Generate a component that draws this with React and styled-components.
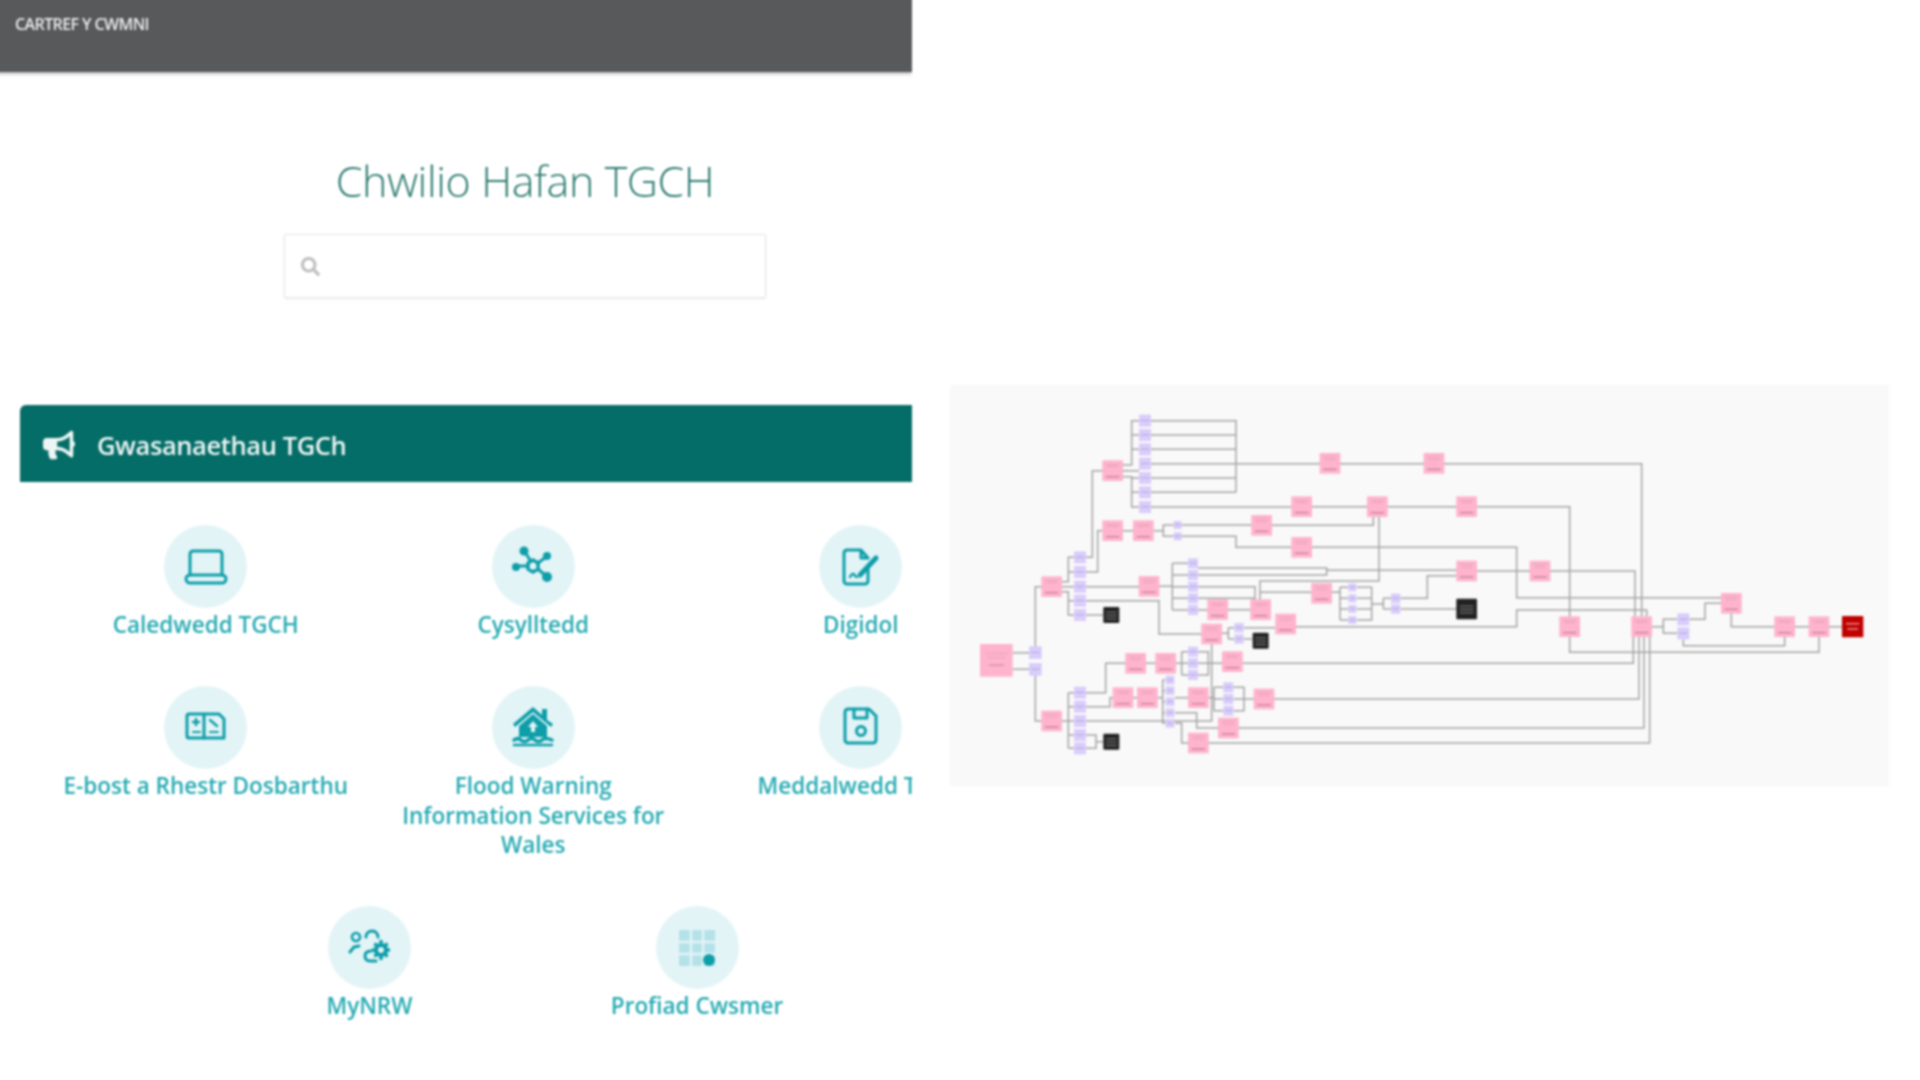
import React from 'react';
import styled, { createGlobalStyle } from 'styled-components';
import { FaBullhorn, FaSearch } from 'react-icons/fa';

const GlobalStyle = createGlobalStyle`
  html, body { margin: 0; padding: 0; background: #fff; overflow: hidden; }
  body { font-family: "Open Sans", "Noto Sans", sans-serif; }
`;

//===================================================
// ================ Define Wrappers =================
//===================================================

// The negative margin keeps the soft edge of the blur outside the window.
const Page = styled.div`
  display: flex;
  width: 1920px;
  height: 1080px;
  margin: -6px;
  padding: 6px;
  overflow: hidden;
  background: #fff;
  filter: blur(0.9px);
`;

const LeftPanel = styled.main`
  width: 912px;
  height: 1080px;
  flex: none;
  overflow: hidden;
  margin-top: -6px;
  margin-left: -6px;
  padding-top: 6px;
  padding-left: 6px;
`;

const TopBar = styled.header`
  height: 78px;
  margin: -6px 0 0 -6px;
  padding: 21px 15px 0 21px;
  box-sizing: border-box;
  background: #58595b;
  box-shadow: 0 1px 4px rgba(0, 0, 0, 0.4);
  color: #ececec;
  font-size: 16px;
  font-weight: 600;
  line-height: 18px;
  letter-spacing: -0.6px;
`;

const SearchBlock = styled.section`
  width: 1050px;
  display: flex;
  flex-direction: column;
  align-items: center;
  padding-top: 81px;
`;

const Title = styled.h1`
  margin: 0;
  font-size: 43px;
  line-height: 56px;
  font-weight: 300;
  color: #2c7b71;
  letter-spacing: -0.4px;
`;

const SearchBox = styled.div`
  width: 482px;
  height: 64px;
  margin-top: 25px;
  padding-left: 16px;
  box-sizing: border-box;
  display: flex;
  align-items: center;
  background: #fff;
  border: 1px solid #e6e6e6;
  border-radius: 2px;
  box-shadow: 0 1px 2px rgba(0, 0, 0, 0.08);
  color: #bdbdbd;
  font-size: 19px;
`;

const Banner = styled.div`
  width: 1010px;
  height: 77px;
  margin: 107px 0 0 20px;
  padding: 2px 0 0 23px;
  box-sizing: border-box;
  display: flex;
  align-items: center;
  gap: 22px;
  background: #056d67;
  border-radius: 6px 0 0 0;
  color: #eef6f5;
  font-size: 25.5px;
  font-weight: 600;
  letter-spacing: -0.4px;
`;

const ServiceList = styled.div`
  width: 982.5px;
  margin: 43px 0 0 42px;
  display: flex;
  flex-wrap: wrap;
  justify-content: center;
  row-gap: 46px;
`;

const ServiceItem = styled.a`
  width: 327.5px;
  padding: 0 20px;
  box-sizing: border-box;
  display: flex;
  flex-direction: column;
  align-items: center;
  color: #27abb3;
  text-align: center;
`;

const IconCircle = styled.span`
  width: 83px;
  height: 83px;
  display: flex;
  align-items: center;
  justify-content: center;
  border-radius: 50%;
  background: #e3f4f7;
  color: #0e9ea9;
`;

const ServiceLabel = styled.span`
  margin-top: 2px;
  font-size: 22.5px;
  line-height: 29.8px;
  font-weight: 600;
  white-space: pre-line;
`;

const DiagramPanel = styled.aside`
  width: 939px;
  height: 401px;
  flex: none;
  margin: 385px 0 0 38px;
  background: #f9f9f9;
`;

const DiagramCanvas = styled.svg`
  display: block;
  width: 100%;
  height: 100%;
  filter: blur(0.3px);
`;

//===================================================
// ================= Service icons ==================
//===================================================

const Icon = ({ children }) => (
  <svg width="46" height="46" viewBox="0 0 46 46" fill="none" stroke="currentColor" strokeWidth="3" strokeLinejoin="round" strokeLinecap="round">
    {children}
  </svg>
);

const LaptopIcon = () => (
  <Icon>
    <path d="M7 31V10a3 3 0 0 1 3-3h26a3 3 0 0 1 3 3v21" />
    <rect x="3" y="31" width="40" height="8" rx="4" />
  </Icon>
);

const NetworkIcon = () => (
  <Icon>
    <path d="M23 16l5 3v6l-5 3-5-3v-6z" strokeWidth="3.5" />
    <path d="M18 22H7M20 16l-5-8M28 19l8-6M28 25l8 7" />
    <g fill="currentColor" stroke="none">
      <circle cx="6" cy="23" r="4" />
      <circle cx="14" cy="7" r="4.5" />
      <circle cx="37" cy="12" r="4" />
      <circle cx="37" cy="33" r="5" />
    </g>
  </Icon>
);

const DocumentPenIcon = () => (
  <Icon>
    <path d="M30 22v15a3 3 0 0 1-3 3H9a3 3 0 0 1-3-3V9a3 3 0 0 1 3-3h14l7 8h-7V6" />
    <path d="M12 33c2-4 4-4 5-1l2 1" strokeWidth="2.5" />
    <path d="M22 31l16-17" strokeWidth="5" />
  </Icon>
);

const MailIcon = () => (
  <Icon>
    <path d="M6 10h30l5 5v19H6a2 2 0 0 1-2-2V12a2 2 0 0 1 2-2z" />
    <path d="M21 10v24" />
    <path d="M10 18h6M13 15v6M27 16l7 6" strokeWidth="2.5" />
    <path d="M10 28h7M27 28h8" strokeWidth="2" />
  </Icon>
);

const FloodHouseIcon = () => (
  <Icon>
    <path d="M3 20L23 3l9 8V5h5v11l6 4-2 3-18-15L5 23z" fill="currentColor" stroke="none" />
    <path d="M9 22L23 10l14 12v11H9z" fill="currentColor" stroke="none" />
    <path d="M23 17l5 6h-3v5h-4v-5h-3z" fill="#e3f4f7" stroke="none" />
    <path d="M4 36c3-2 5-2 7 0s5 2 7 0 5-2 7 0 5 2 7 0 5-2 10 0" strokeWidth="3.5" />
    <path d="M4 41h38" strokeWidth="2.5" />
  </Icon>
);

const SaveIcon = () => (
  <Icon>
    <path d="M10 5h21l7 7v24a3 3 0 0 1-3 3H10a3 3 0 0 1-3-3V8a3 3 0 0 1 3-3z" />
    <path d="M16 5v9h13V5" />
    <circle cx="23" cy="27" r="4.5" />
  </Icon>
);

const PeopleGearIcon = () => (
  <Icon>
    <circle cx="9" cy="12" r="4" strokeWidth="2.6" />
    <path d="M3 27l4-5 5-1" />
    <path d="M19 12c0-4 3-6 6-6 4 0 6 3 6 6" />
    <path d="M24 26c-4 0-6 2-6 5s2 5 5 5h6" />
    <circle cx="34" cy="25" r="5" strokeWidth="4" />
    <path d="M34 15v4M34 31v4M25 25h4M39 25h4M27.5 18.5l3 3M37.5 28.5l3 3M27.5 31.5l3-3M37.5 21.5l3-3" strokeWidth="3.4" strokeLinecap="butt" />
  </Icon>
);

const KeypadIcon = () => (
  <svg width="46" height="46" viewBox="0 0 46 46">
    <rect x="5" y="5" width="36" height="36" fill="#b4e2e8" />
    <path d="M17 5v36M29 5v36M5 17h36M5 29h36" stroke="#e3f4f7" strokeWidth="2.5" />
    <circle cx="35" cy="35" r="6" fill="#0e9ea9" />
  </svg>
);

const SERVICES = [
  { label: 'Caledwedd TGCH', icon: <LaptopIcon /> },
  { label: 'Cysylltedd', icon: <NetworkIcon /> },
  { label: 'Digidol', icon: <DocumentPenIcon /> },
  { label: 'E-bost a Rhestr Dosbarthu', icon: <MailIcon /> },
  { label: 'Flood Warning\nInformation Services for\nWales', icon: <FloodHouseIcon /> },
  { label: 'Meddalwedd TGCH', icon: <SaveIcon /> },
  { label: 'MyNRW', icon: <PeopleGearIcon /> },
  { label: 'Profiad Cwsmer', icon: <KeypadIcon /> }
];

//===================================================
// ================= Process diagram ================
//===================================================
// Coordinates are 1/3 px, so the viewBox is three times the panel size.

const PINK = [
  [305, 605], [305, 1008], [488, 257], [488, 437], [580, 437], [597, 604], [803, 674], [932, 674],
  [785, 747], [1007, 717], [1115, 625], [935, 421], [1055, 365], [1282, 365], [1055, 487], [1140, 235],
  [1452, 235], [557, 835], [647, 835], [847, 830], [519, 938], [592, 938], [745, 938], [942, 942],
  [835, 1029], [745, 1074], [1550, 365], [1550, 558], [1770, 558], [1859, 725], [2075, 725], [2344, 655],
  [2504, 725], [2607, 725]
];

const BLACK = [[484, 690, 48], [932, 767, 48], [484, 1070, 48], [1550, 672, 62]];

const LAVENDER = [
  [256, 803, 38], [256, 853, 38],
  [390, 517, 36], [390, 561, 36], [390, 605, 36], [390, 647, 36], [390, 690, 36],
  [390, 923, 36], [390, 965, 36], [390, 1008, 36], [390, 1050, 36], [390, 1090, 36],
  [585, 107, 36], [585, 150, 36], [585, 193, 36], [585, 236, 36], [585, 279, 36], [585, 322, 36], [585, 366, 36],
  [683, 420, 24], [683, 454, 24],
  [729, 535, 30], [729, 570, 30], [729, 605, 30], [729, 640, 30], [729, 675, 30],
  [867, 728, 28], [867, 762, 28],
  [729, 800, 30], [729, 835, 30], [729, 870, 30],
  [660, 885, 26], [660, 917, 26], [660, 950, 26], [660, 983, 26], [660, 1015, 26],
  [835, 907, 30], [835, 942, 30], [835, 977, 30],
  [1207, 607, 24], [1207, 640, 24], [1207, 672, 24], [1207, 705, 24],
  [1337, 640, 28], [1337, 672, 28],
  [2200, 703, 36], [2200, 745, 36]
];

const EDGES = [
  'M188 803H237', 'M188 853H237', 'M256 785V605H275', 'M256 871V1008H275',
  'M335 590H355V517H372', 'M355 561H372', 'M335 605H372', 'M335 620H355V690H372', 'M355 647H372',
  'M408 517H427V257H458', 'M408 561H443V437H458', 'M408 605H567', 'M627 604H667', 'M667 535V675',
  'M667 535H714', 'M667 570H714', 'M667 605H714', 'M667 640H714', 'M667 675H714',
  'M408 647H627V747H755', 'M408 690H460',
  'M518 240H545V107H567', 'M545 150H567', 'M545 193H567', 'M518 257H567', 'M545 279H567', 'M545 322H567', 'M518 275H545V366H567',
  'M603 107H858V322', 'M603 150H858', 'M603 193H858', 'M603 236H1110', 'M603 279H858', 'M603 322H858',
  'M1170 236H1422', 'M1482 236H2075V695',
  'M603 366H1025', 'M1085 365H1252', 'M1312 365H1520', 'M1580 365H1859V695',
  'M518 437H550', 'M610 437H640V420H671', 'M640 437V454H671', 'M695 420H905', 'M965 421H1270V395',
  'M695 454H858V487H1025', 'M1085 487H1700V638H2314',
  'M744 549H1130V570H744', 'M1130 556H1520', 'M930 645V588H1287V395',
  'M1580 558H1740', 'M1800 558H2055V695',
  'M744 605H915V645', 'M744 640H915', 'M744 675H773', 'M833 674H902', 'M930 622H1085',
  'M1145 622H1170', 'M1170 607V705', 'M1170 607H1195', 'M1170 640H1195', 'M1170 672H1195', 'M1170 705H1195',
  'M1220 607H1265V705H1220', 'M1220 640H1265', 'M1220 672H1265', 'M1265 657H1300', 'M1300 640V672', 'M1300 640H1325', 'M1300 672H1325',
  'M1351 640H1432V572H1520', 'M1351 672H1520',
  'M815 745H835', 'M835 728V762', 'M835 728H853', 'M835 762H853', 'M881 728H977', 'M881 762H908',
  'M1037 725H1700V675H2090V695',
  'M2105 725H2140V703H2182', 'M2140 725V745H2182', 'M2218 703H2265V655H2314',
  'M2200 763V782H2504V755', 'M2344 685V725H2474', 'M2534 725H2577', 'M2637 725H2676', 'M1859 755V802H2607V755',
  'M877 835H2050V755', 'M972 942H2067V755', 'M865 1029H2082V755', 'M775 1074H2099V755',
  'M335 1008H355', 'M355 923V1090', 'M355 923H372', 'M355 965H372', 'M355 1008H372', 'M355 1050H372', 'M355 1090H372',
  'M408 923H467V835H527', 'M408 965H480V938H490', 'M408 1008H785V777', 'M408 1050H438V1090H408', 'M438 1070H460',
  'M587 835H617', 'M677 835H695', 'M695 800V870', 'M695 800H714', 'M695 835H714', 'M695 870H714',
  'M744 800H775V870H744', 'M744 835H817',
  'M549 938H562', 'M622 938H638', 'M638 885V1015', 'M638 885H645', 'M638 917H645', 'M638 950H645', 'M638 983H645', 'M638 1015H645',
  'M675 938H715', 'M775 938H792', 'M792 907V977', 'M792 907H820', 'M792 942H820', 'M792 977H820',
  'M850 907H882V977H850', 'M850 942H912',
  'M675 983H740V1029H805', 'M675 1015H695V1074H715'
];

const PinkNode = ({ x, y }) => (
  <g>
    <rect x={x - 31} y={y - 31} width="62" height="62" fill="#ffb3cd" />
    <rect x={x - 20} y={y - 20} width="40" height="2" fill="#db9db2" />
    <rect x={x - 16} y={y - 13} width="32" height="2" fill="#db9db2" />
    <rect x={x - 20} y={y + 16} width="40" height="4" fill="#c4849a" />
  </g>
);

const LavenderNode = ({ x, y, size }) => (
  <g>
    <rect x={x - size / 2} y={y - size / 2} width={size} height={size} fill="#d8cdfb" />
    <rect x={x - size / 3} y={y - 2} width={(size * 2) / 3} height="3" fill="#b3a5dc" />
  </g>
);

const BlackNode = ({ x, y, size }) => (
  <g>
    <rect x={x - size / 2} y={y - size / 2} width={size} height={size} rx="3" fill="#222" />
    <rect x={x - size / 3} y={y - 10} width={(size * 2) / 3} height="3" fill="#888" />
    <rect x={x - size / 3} y={y} width={(size * 2) / 3} height="3" fill="#888" />
    <rect x={x - size / 3} y={y + 10} width={(size * 2) / 3} height="3" fill="#888" />
  </g>
);

const ProcessDiagram = () => (
  <DiagramCanvas viewBox="0 0 2817 1203">
    <path d={EDGES.join(' ')} fill="none" stroke="#a4a4a4" strokeWidth="4.5" />
    {PINK.map(([x, y]) => <PinkNode key={`${x}-${y}`} x={x} y={y} />)}
    {LAVENDER.map(([x, y, size]) => <LavenderNode key={`${x}-${y}`} x={x} y={y} size={size} />)}
    {BLACK.map(([x, y, size]) => <BlackNode key={`${x}-${y}`} x={x} y={y} size={size} />)}
    <rect x="90" y="777" width="98" height="98" fill="#ffb3cd" />
    <rect x="106" y="805" width="66" height="2" fill="#db9db2" />
    <rect x="112" y="816" width="54" height="2" fill="#db9db2" />
    <rect x="116" y="839" width="46" height="3" fill="#c4849a" />
    <rect x="2676" y="693" width="64" height="64" rx="2" fill="#c00000" />
    <rect x="2688" y="714" width="40" height="4" fill="#f0a0a0" />
    <rect x="2692" y="730" width="32" height="4" fill="#f0a0a0" />
  </DiagramCanvas>
);

export default function App() {
  return (
    <>
      <GlobalStyle />
      <Page>
        <LeftPanel>
          <TopBar>CARTREF Y CWMNI</TopBar>
          <SearchBlock>
            <Title>Chwilio Hafan TGCH</Title>
            <SearchBox><FaSearch /></SearchBox>
          </SearchBlock>
          <Banner>
            <FaBullhorn size={32} />
            Gwasanaethau TGCh
          </Banner>
          <ServiceList>
            {SERVICES.map((service) => (
              <ServiceItem key={service.label}>
                <IconCircle>{service.icon}</IconCircle>
                <ServiceLabel>{service.label}</ServiceLabel>
              </ServiceItem>
            ))}
          </ServiceList>
        </LeftPanel>
        <DiagramPanel>
          <ProcessDiagram />
        </DiagramPanel>
      </Page>
    </>
  );
}
